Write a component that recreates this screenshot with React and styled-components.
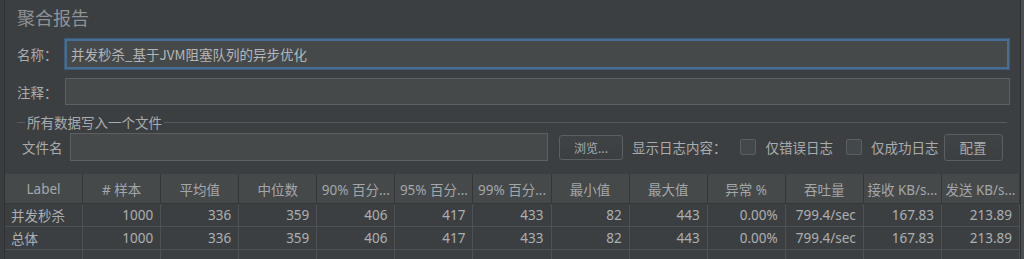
import React from 'react';
import styled, { createGlobalStyle } from 'styled-components';

const GlobalStyle = createGlobalStyle`
  html, body {
    margin: 0;
    padding: 0;
    background: #3c3f41;
  }
  body {
    font-family: "Noto Sans", "Noto Sans CJK SC", sans-serif;
    color: #bbbbbb;
  }
`;

const Frame = styled.div`
  display: flex;
  width: 1024px;
  height: 259px;
  overflow: hidden;
  background: #3c3f41;
`;

const LeftEdge = styled.div`
  width: 4px;
  flex-shrink: 0;
  border-right: 1px solid #2f3133;
  background: #3a3d3f;
`;

const RightEdge = styled.div`
  width: 3px;
  flex-shrink: 0;
  border-left: 1px solid #2b2d2e;
  background: #4b4f51;
`;

const Main = styled.div`
  width: 1015px;
  flex-shrink: 0;
`;

const Title = styled.div`
  padding: 4px 0 0 12px;
  height: 26px;
  font-size: 18px;
  line-height: 26px;
  color: #8d9296;
  font-family: "Noto Sans CJK SC", sans-serif;
`;

const FieldRow = styled.div`
  display: flex;
  align-items: center;
  padding: 0 ${p => p.$right}px 0 12px;
  height: ${p => p.$h}px;
  margin-top: ${p => p.$top}px;
`;

const Label = styled.span`
  width: 48px;
  font-size: 13.5px;
  color: #a9acae;
  font-family: "Noto Sans CJK SC", sans-serif;
`;

const TextBox = styled.div`
  flex: 1;
  height: 100%;
  box-sizing: border-box;
  background: #45494a;
  border: ${p => (p.$focus ? '2px solid #466d94' : '1px solid #5d6061')};
  box-shadow: ${p => (p.$focus ? '0 0 0 1px #3d5a78' : 'none')};
  display: flex;
  align-items: center;
  padding-left: ${p => (p.$focus ? 4 : 5)}px;
  font-size: 13.5px;
  color: #b4b7b9;
  font-family: "Noto Sans CJK SC", sans-serif;
`;

const Group = styled.fieldset`
  margin: 8px 13px 0 12px;
  padding: 0 0 0 5px;
  border: none;
  border-top: 1px solid #55595b;
  min-width: 0;
`;

const Legend = styled.legend`
  padding: 0 2px;
  margin-left: 3px;
  font-size: 13.5px;
  line-height: 19px;
  color: #a9acae;
  font-family: "Noto Sans CJK SC", sans-serif;
`;

const FileRow = styled.div`
  display: flex;
  align-items: center;
  height: 28px;
  margin-top: 1px;
`;

const FileLabel = styled.span`
  width: 48px;
  font-size: 13.5px;
  color: #a9acae;
  font-family: "Noto Sans CJK SC", sans-serif;
`;

const FileBox = styled.div`
  width: 478px;
  height: 28px;
  box-sizing: border-box;
  background: #45494a;
  border: 1px solid #5d6061;
`;

const Button = styled.div`
  height: ${p => p.$h}px;
  box-sizing: border-box;
  width: ${p => p.$w}px;
  margin-left: ${p => p.$ml}px;
  border: 1px solid #5b5f61;
  border-radius: 3px;
  background: linear-gradient(#3f4345, #3b3f41);
  display: flex;
  align-items: center;
  justify-content: center;
  font-size: ${p => p.$fs}px;
  color: #a9acae;
  font-family: "Noto Sans CJK SC", sans-serif;
`;

const Text = styled.span`
  margin-left: ${p => p.$ml}px;
  font-size: 13.5px;
  color: #a9acae;
  font-family: "Noto Sans CJK SC", sans-serif;
`;

const Check = styled.span`
  display: inline-block;
  width: 16px;
  height: 16px;
  box-sizing: border-box;
  margin-left: ${p => p.$ml}px;
  border: 1px solid #5b5f61;
  border-radius: 2px;
  background: #43494a;
`;

const Table = styled.div`
  margin-top: 13px;
  display: grid;
  grid-template-columns: repeat(13, 1fr);
`;

const HeadCell = styled.div`
  height: 30px;
  box-sizing: border-box;
  background: #45494a;
  border-right: 1px solid #33373a;
  border-bottom: 1px solid #33373a;
  display: flex;
  align-items: center;
  justify-content: center;
  font-size: 13.5px;
  color: #a3a7aa;
  white-space: nowrap;
  overflow: hidden;
  font-family: "Noto Sans", "Noto Sans CJK SC", sans-serif;
`;

const Cell = styled.div`
  height: 23px;
  box-sizing: border-box;
  border-right: 1px solid #4d5153;
  border-bottom: 1px solid #4d5153;
  display: flex;
  align-items: center;
  justify-content: ${p => (p.$left ? 'flex-start' : 'flex-end')};
  padding: ${p => (p.$left ? '0 0 0 6px' : '0 7px 0 0')};
  font-size: 13.5px;
  color: #acb0b2;
  white-space: nowrap;
  font-family: "Noto Sans", "Noto Sans CJK SC", sans-serif;
`;

const headers = [
  'Label', '# 样本', '平均值', '中位数', '90% 百分...', '95% 百分...', '99% 百分...',
  '最小值', '最大值', '异常 %', '吞吐量', '接收 KB/s...', '发送 KB/s...',
];

const rows = [
  ['并发秒杀', '1000', '336', '359', '406', '417', '433', '82', '443', '0.00%', '799.4/sec', '167.83', '213.89'],
  ['总体', '1000', '336', '359', '406', '417', '433', '82', '443', '0.00%', '799.4/sec', '167.83', '213.89'],
  ['', '', '', '', '', '', '', '', '', '', '', '', ''],
];

export default function App() {
  return (
    <>
      <GlobalStyle />
      <Frame>
        <LeftEdge />
        <Main>
          <Title>聚合报告</Title>
          <FieldRow $h={30} $top={9} $right={11}>
            <Label>名称：</Label>
            <TextBox $focus>并发秒杀_基于JVM阻塞队列的异步优化</TextBox>
          </FieldRow>
          <FieldRow $h={27} $top={9} $right={10}>
            <Label>注释：</Label>
            <TextBox />
          </FieldRow>
          <Group>
            <Legend>所有数据写入一个文件</Legend>
            <FileRow>
              <FileLabel>文件名</FileLabel>
              <FileBox />
              <Button $w={64} $h={25} $ml={11} $fs={12}>浏览...</Button>
              <Text $ml={9}>显示日志内容：</Text>
              <Check $ml={13} />
              <Text $ml={10}>仅错误日志</Text>
              <Check $ml={13} />
              <Text $ml={9}>仅成功日志</Text>
              <Button $w={59} $h={27} $ml={5} $fs={13.5}>配置</Button>
            </FileRow>
          </Group>
          <Table>
            {headers.map(h => (
              <HeadCell key={h}>{h}</HeadCell>
            ))}
            {rows.map((r, i) =>
              r.map((v, j) => (
                <Cell key={`${i}-${j}`} $left={j === 0}>{v}</Cell>
              ))
            )}
          </Table>
        </Main>
        <RightEdge />
      </Frame>
    </>
  );
}
